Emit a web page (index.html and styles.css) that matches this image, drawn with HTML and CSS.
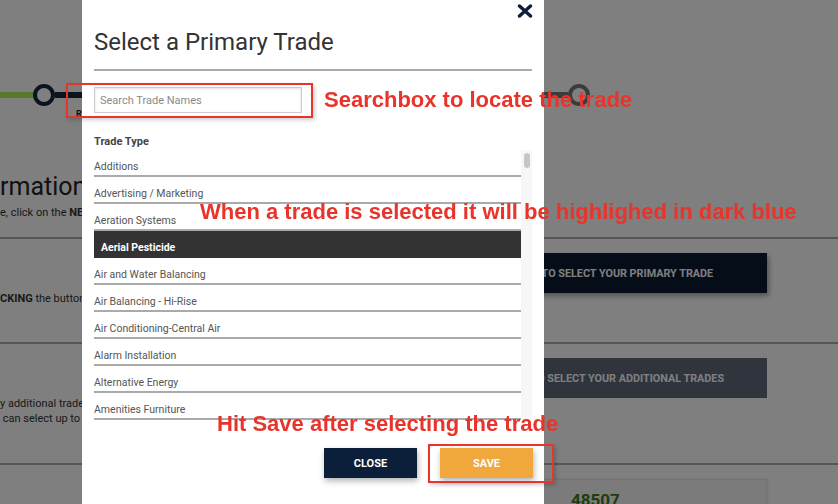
FILE: index.html
```html
<!DOCTYPE html>
<html lang="en">
<head>
    <meta charset="UTF-8">
    <meta name="viewport" content="width=device-width, initial-scale=1.0">
    <title>Select a Primary Trade</title>
    <link rel="stylesheet" href="styles.css">
</head>
<body>
    <!-- Page behind the dialog -->
    <div class="page">
        <div class="stepper">
            <span class="seg seg-done"></span>
            <span class="dot dot-current"></span>
            <span class="seg seg-current"></span>
            <span class="seg seg-todo"></span>
            <span class="dot dot-todo"></span>
        </div>
        <div class="step-labels"><span>REVIEW</span></div>

        <h2 class="page-title">rmation</h2>
        <p class="intro">e, click on the <b>NEXT</b> button.</p>

        <div class="trade-row first">
            <p class="row-text"><b>CKING</b> the button.</p>
            <button class="btn-page btn-pick">CLICK HERE TO SELECT YOUR PRIMARY TRADE</button>
        </div>
        <div class="trade-row second">
            <p class="row-text">y additional trades.<br>&nbsp;can select up to ten.</p>
            <button class="btn-page btn-extra">CLICK HERE TO SELECT YOUR ADDITIONAL TRADES</button>
        </div>
        <div class="trade-row third">
            <p class="row-text"></p>
            <div class="card"><span class="card-num">48507</span></div>
        </div>
    </div>

    <div class="overlay"></div>

    <!-- Dialog -->
    <div class="modal">
        <button class="modal-close" aria-label="Close">
            <svg width="16" height="14" viewBox="0 0 16 14">
                <path d="M2.5 2 L13.5 12 M13.5 2 L2.5 12" stroke="#0d1f3c" stroke-width="3.4" stroke-linecap="round" fill="none"/>
            </svg>
        </button>
        <h3 class="modal-title">Select a Primary Trade</h3>
        <div class="modal-rule"></div>
        <input class="trade-search" type="text" placeholder="Search Trade Names">
        <div class="list-label">Trade Type</div>
        <div class="trade-list">
            <ul class="trade-items">
                <li>Additions</li>
                <li>Advertising / Marketing</li>
                <li>Aeration Systems</li>
                <li class="selected">Aerial Pesticide</li>
                <li>Air and Water Balancing</li>
                <li>Air Balancing - Hi-Rise</li>
                <li>Air Conditioning-Central Air</li>
                <li>Alarm Installation</li>
                <li>Alternative Energy</li>
                <li>Amenities Furniture</li>
            </ul>
            <div class="scroll-track"><div class="scroll-thumb"></div></div>
        </div>
        <div class="modal-footer">
            <button class="btn btn-close">CLOSE</button>
            <button class="btn btn-save">SAVE</button>
        </div>
    </div>

    <!-- Help annotations -->
    <div class="note-box box-search"></div>
    <div class="note note-search">Searchbox to locate the trade</div>
    <div class="note note-selected">When a trade is selected it will be highlighed in dark blue</div>
    <div class="note note-save">Hit Save after selecting the trade</div>
    <div class="note-box box-save"></div>
</body>
</html>
```

FILE: styles.css
```css
body {
    margin: 0;
    font-family: Roboto, "Noto Sans", sans-serif;
    color: #222;
    background: #fff;
    overflow: hidden;
}

/* ---- page behind the dialog ---- */
.page {
    width: 838px;
}
.stepper {
    display: flex;
    align-items: center;
    height: 22px;
    margin-top: 84px;
}
.seg {
    height: 6px;
}
.seg-done {
    width: 33px;
    background: #b4ee60;
}
.seg-current {
    width: 300px;
    background: #142840;
}
.seg-todo {
    width: 213px;
    background: #787878;
}
.dot {
    width: 22px;
    height: 22px;
    box-sizing: border-box;
    border-radius: 50%;
    border: 4px solid #142840;
    background: #fff;
}
.dot-todo {
    border-color: #787878;
}
.step-labels {
    margin-top: 2px;
    padding-left: 76px;
    font-size: 9px;
    font-weight: 700;
    line-height: 12px;
    color: #142840;
}
.page-title {
    margin: 52px 0 0;
    font-size: 25px;
    font-weight: 400;
    line-height: 30px;
    color: #222;
}
.intro {
    margin: 4px 0 0;
    font-size: 11px;
    line-height: 14px;
    color: #333;
    white-space: nowrap;
}
.trade-row {
    display: grid;
    grid-template-columns: 426px 341px;
    border-top: 2px solid #aaa;
    padding: 14px 0 37px;
}
.trade-row.first {
    margin-top: 17px;
}
.row-text {
    margin: 0;
    font-size: 11px;
    line-height: 12px;
    color: #333;
    white-space: nowrap;
}
.first .row-text {
    margin-top: 40px;
}
.second .row-text {
    margin-top: 38px;
    line-height: 15px;
}
.btn-page {
    height: 40px;
    border: none;
    font-family: Roboto, sans-serif;
    font-size: 10.8px;
    font-weight: 700;
    color: #fff;
    align-self: start;
}
.btn-pick {
    background: #081a30;
    box-shadow: 2px 3px 5px rgba(0, 0, 0, 0.35);
}
.btn-extra {
    background: #5e687a;
}
.card {
    height: 60px;
    padding: 10px 0 0 144px;
    background: #f6f6f6;
    border: 1px solid #e4e4e4;
    box-shadow: 0 1px 4px rgba(0, 0, 0, 0.15);
}
.card-num {
    font-size: 17px;
    font-weight: 700;
    line-height: 20px;
    color: #3c7c22;
}

.overlay {
    position: fixed;
    inset: 0;
    background: rgba(0, 0, 0, 0.5);
}

/* ---- dialog ---- */
.modal {
    position: fixed;
    top: 0;
    left: 82px;
    width: 462px;
    height: 504px;
    box-sizing: border-box;
    padding: 0 12px;
    background: #fff;
}
.modal-close {
    position: absolute;
    top: 4px;
    right: 11px;
    padding: 0;
    border: none;
    background: none;
    line-height: 0;
}
.modal-title {
    margin: 0;
    padding-top: 27px;
    font-size: 24px;
    font-weight: 400;
    line-height: 30px;
    color: #333;
}
.modal-rule {
    height: 2px;
    margin-top: 12px;
    background: #aaa;
}
.trade-search {
    display: block;
    width: 208px;
    height: 26px;
    margin-top: 16px;
    box-sizing: border-box;
    padding: 0 5px;
    border: 1px solid #ccc;
    box-shadow: inset 0 1px 3px rgba(0, 0, 0, 0.12);
    font-family: Roboto, sans-serif;
    font-size: 11px;
    color: #333;
}
.trade-search::placeholder {
    color: #8a8a8a;
}
.list-label {
    margin-top: 22px;
    font-size: 11px;
    font-weight: 700;
    line-height: 14px;
    color: #444;
}
.trade-list {
    display: flex;
    height: 270px;
    margin-top: 1px;
}
.trade-items {
    flex: 1;
    margin: 0;
    padding: 0;
    list-style: none;
    overflow: hidden;
}
.trade-items li {
    padding: 10px 0 1px;
    font-size: 10.5px;
    line-height: 14px;
    color: #555;
    border-bottom: 2px solid #aaa;
}
.trade-items li.selected {
    padding-left: 7px;
    background: #333;
    border-bottom-color: #333;
    color: #fff;
    font-weight: 700;
}
.scroll-track {
    width: 11px;
    background: #f7f7f7;
}
.scroll-thumb {
    width: 6px;
    height: 15px;
    margin: 3px 0 0 3px;
    border-radius: 3px;
    background: #c6c6c6;
}
.modal-footer {
    display: flex;
    justify-content: flex-end;
    gap: 23px;
    margin-top: 28px;
    margin-right: -1px;
}
.btn {
    width: 93px;
    height: 30px;
    border: none;
    font-family: Roboto, sans-serif;
    font-size: 11px;
    font-weight: 700;
    color: #fff;
    box-shadow: 1px 3px 6px rgba(0, 0, 0, 0.3);
}
.btn-close {
    background: #0b1e3a;
}
.btn-save {
    background: #f0a73b;
}

/* ---- help annotations ---- */
.note {
    position: absolute;
    font-family: "Liberation Sans", Arial, sans-serif;
    font-size: 22px;
    font-weight: 700;
    line-height: 24px;
    color: #e8342b;
    white-space: nowrap;
}
.note-search {
    left: 324px;
    top: 88px;
}
.note-selected {
    left: 200px;
    top: 200px;
}
.note-save {
    left: 217px;
    top: 412px;
}
.note-box {
    position: absolute;
    box-sizing: border-box;
    border: 2px solid #e8342b;
    box-shadow: 2px 2px 4px rgba(0, 0, 0, 0.2);
}
.box-search {
    left: 66px;
    top: 83px;
    width: 247px;
    height: 35px;
}
.box-save {
    left: 428px;
    top: 444px;
    width: 126px;
    height: 39px;
}
```
